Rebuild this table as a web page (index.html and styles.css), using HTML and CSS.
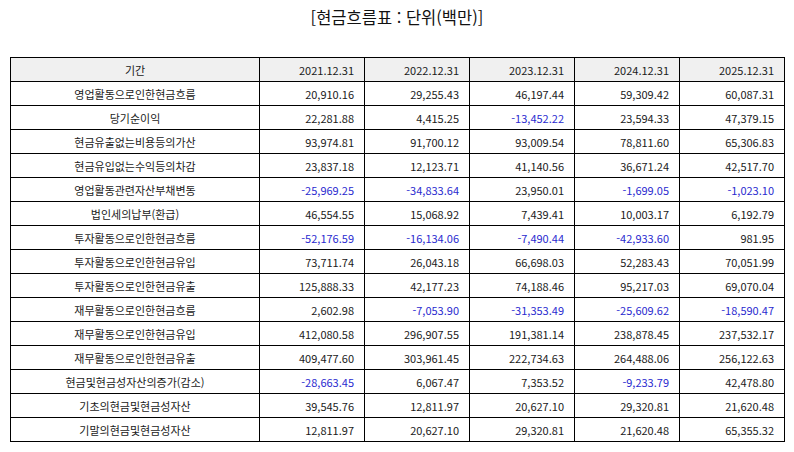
FILE: index.html
```html
<!DOCTYPE html>
<html lang="ko">
<head>
<meta charset="utf-8">
<link rel="stylesheet" href="styles.css">
</head>
<body>
<div class="title">[현금흐름표 : 단위(백만)]</div>
<table class="cf">
<colgroup><col class="c-label"><col class="c-num"><col class="c-num"><col class="c-num"><col class="c-num"><col class="c-num"></colgroup>
<thead>
<tr><th>기간</th><th>2021.12.31</th><th>2022.12.31</th><th>2023.12.31</th><th>2024.12.31</th><th>2025.12.31</th></tr>
</thead>
<tbody>
<tr><td>영업활동으로인한현금흐름</td><td>20,910.16</td><td>29,255.43</td><td>46,197.44</td><td>59,309.42</td><td>60,087.31</td></tr>
<tr><td>당기순이익</td><td>22,281.88</td><td>4,415.25</td><td class="neg">-13,452.22</td><td>23,594.33</td><td>47,379.15</td></tr>
<tr><td>현금유출없는비용등의가산</td><td>93,974.81</td><td>91,700.12</td><td>93,009.54</td><td>78,811.60</td><td>65,306.83</td></tr>
<tr><td>현금유입없는수익등의차감</td><td>23,837.18</td><td>12,123.71</td><td>41,140.56</td><td>36,671.24</td><td>42,517.70</td></tr>
<tr><td>영업활동관련자산부채변동</td><td class="neg">-25,969.25</td><td class="neg">-34,833.64</td><td>23,950.01</td><td class="neg">-1,699.05</td><td class="neg">-1,023.10</td></tr>
<tr><td>법인세의납부(환급)</td><td>46,554.55</td><td>15,068.92</td><td>7,439.41</td><td>10,003.17</td><td>6,192.79</td></tr>
<tr><td>투자활동으로인한현금흐름</td><td class="neg">-52,176.59</td><td class="neg">-16,134.06</td><td class="neg">-7,490.44</td><td class="neg">-42,933.60</td><td>981.95</td></tr>
<tr><td>투자활동으로인한현금유입</td><td>73,711.74</td><td>26,043.18</td><td>66,698.03</td><td>52,283.43</td><td>70,051.99</td></tr>
<tr><td>투자활동으로인한현금유출</td><td>125,888.33</td><td>42,177.23</td><td>74,188.46</td><td>95,217.03</td><td>69,070.04</td></tr>
<tr><td>재무활동으로인한현금흐름</td><td>2,602.98</td><td class="neg">-7,053.90</td><td class="neg">-31,353.49</td><td class="neg">-25,609.62</td><td class="neg">-18,590.47</td></tr>
<tr><td>재무활동으로인한현금유입</td><td>412,080.58</td><td>296,907.55</td><td>191,381.14</td><td>238,878.45</td><td>237,532.17</td></tr>
<tr><td>재무활동으로인한현금유출</td><td>409,477.60</td><td>303,961.45</td><td>222,734.63</td><td>264,488.06</td><td>256,122.63</td></tr>
<tr><td>현금및현금성자산의증가(감소)</td><td class="neg">-28,663.45</td><td>6,067.47</td><td>7,353.52</td><td class="neg">-9,233.79</td><td>42,478.80</td></tr>
<tr><td>기초의현금및현금성자산</td><td>39,545.76</td><td>12,811.97</td><td>20,627.10</td><td>29,320.81</td><td>21,620.48</td></tr>
<tr><td>기말의현금및현금성자산</td><td>12,811.97</td><td>20,627.10</td><td>29,320.81</td><td>21,620.48</td><td>65,355.32</td></tr>
</tbody>
</table>
</body>
</html>
```
FILE: styles.css
```css
html, body {
  margin: 0;
  padding: 0;
  background: #fff;
}
body {
  font-family: "Noto Sans CJK KR", "Noto Sans", sans-serif;
  color: #1a1a1a;
}
.title {
  text-align: center;
  font-size: 16.5px;
  line-height: 20px;
  padding-top: 7px;
  height: 57px;
  box-sizing: border-box;
  color: #111;
}
.cf {
  margin: 0 10px;
  width: 775px;
  border-collapse: collapse;
  table-layout: fixed;
  font-size: 11px;
}
.c-label { width: 249px; }
.c-num { width: 105px; }
.cf th, .cf td {
  border: 1px solid #000;
  height: 24px;
  padding: 0 10px;
  line-height: 14px;
  box-sizing: border-box;
  text-align: right;
  font-weight: normal;
  white-space: nowrap;
}
.cf th { background: #f0f0f0; }
.cf th:first-child, .cf td:first-child { text-align: center; }
.cf .neg { color: #2a2acf; }
```
